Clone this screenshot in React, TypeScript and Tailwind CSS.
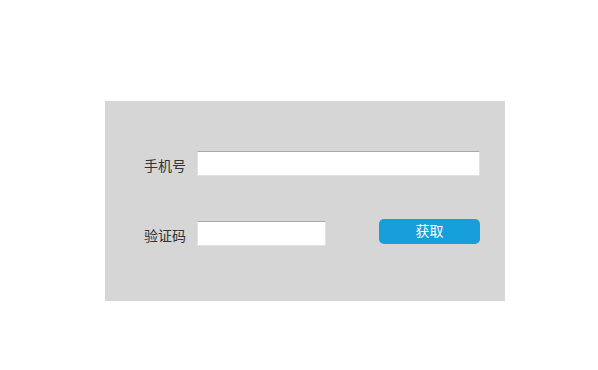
export default function App() {
  return (
    <div className="min-h-screen bg-white pt-[101px] pl-[105px] font-['Liberation_Sans','Noto_Sans_CJK_SC',sans-serif] text-[14px] text-[#333]">
      <div className="h-[200px] w-[400px] bg-[#d6d6d6] pt-[50px]">
        <div className="flex h-[25px] items-start">
          <label className="w-[92px] pr-[11px] pt-[3px] text-right leading-[25px]">手机号</label>
          <input
            type="text"
            className="h-[25px] w-[283px] border border-[#e2e2e2] border-t-[#a9a9a9] bg-white px-1 outline-none"
          />
        </div>

        <div className="mt-[43px] flex items-start">
          <label className="w-[92px] pr-[11px] pt-[5px] text-right leading-[25px]">验证码</label>
          <input
            type="text"
            className="mt-[2px] h-[25px] w-[129px] border border-[#e2e2e2] border-t-[#a9a9a9] bg-white px-1 outline-none"
          />
          <button
            type="button"
            className="ml-[53px] h-[25px] w-[101px] rounded-[5px] bg-[#169fd8] leading-[25px] text-white"
          >
            获取
          </button>
        </div>
      </div>
    </div>
  );
}
